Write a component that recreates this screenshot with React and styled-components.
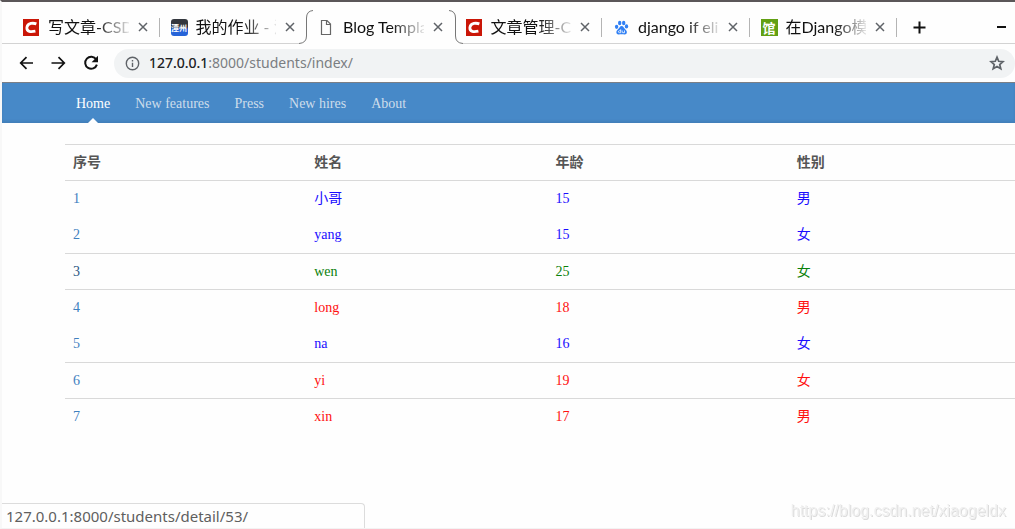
import React from 'react';
import styled, { createGlobalStyle, css } from 'styled-components';

const uiFont = '"Noto Sans", "Noto Sans CJK SC", sans-serif';
const tabFont = 'Lato, "Noto Sans CJK SC", sans-serif';
const pageFont = '"Liberation Serif", "Noto Sans CJK SC", serif';

const GlobalStyle = createGlobalStyle`
  *, *::before, *::after { box-sizing: border-box; }
  body { margin: 0; background: #fefefe; overflow: hidden; }
  button { padding: 0; border: 0; background: none; font: inherit; color: inherit; }
`;

const Window = styled.div`
  display: flex;
  flex-direction: column;
  min-height: 100vh;
  border-top: 2px solid #5b5759;
  border-left: 2px solid #f8f8f8;
  border-bottom: 1px solid #f3f3f3;
  background: #fefefe;
  font-family: ${uiFont};
`;

const TabStrip = styled.div`
  display: flex;
  height: 42px;
  padding-left: 10px;
  background: linear-gradient(#d3d3d3, #d3d3d3) bottom / 100% 1px no-repeat;
`;

const TabList = styled.div`
  display: grid;
  flex: 1;
  min-width: 0;
  grid-template-columns: repeat(6, minmax(0, 1fr));
`;

const Tab = styled.div`
  position: relative;
  display: flex;
  align-items: center;
  padding: 8px 12px 0 11px;
  ${(p) => p.$active && css`background: #fefefe;`}
`;

const TabDivider = styled.span`
  position: absolute;
  right: 0;
  top: 16px;
  width: 1px;
  height: 19px;
  background: #b4b4b4;
`;

const TabEdge = styled.svg`
  position: absolute;
  bottom: 0;
  z-index: 1;
  ${(p) => (p.$side === 'left' ? 'left: -8px;' : 'right: -8px; transform: scaleX(-1);')}
`;

const TabButton = styled.button`
  display: flex;
  flex: 1;
  min-width: 0;
  align-items: center;
  gap: 8px;
  font-family: ${tabFont};
  font-size: 16px;
  line-height: 24px;
  text-align: left;
  color: #111;
`;

const TabTitle = styled.span`
  flex: 1;
  min-width: 0;
  white-space: nowrap;
  mask-image: linear-gradient(to right, #000 60%, transparent 105%);
`;

const CloseButton = styled.button`
  display: grid;
  flex: none;
  width: 10px;
  height: 10px;
  margin-left: 9px;
`;

const StripActions = styled.div`
  display: flex;
  flex: none;
  width: 118px;
  align-items: center;
  justify-content: space-between;
  padding: 8px 9px 0 16px;
`;

const IconButton = styled.button`
  display: grid;
  flex: none;
  place-items: center;
`;

const Toolbar = styled.div`
  display: flex;
  align-items: center;
  height: 38px;
  padding-left: 15px;
`;

const NavButtons = styled.div`
  display: flex;
  gap: 17px;
  margin-right: 15px;
`;

const AddressBar = styled.label`
  display: flex;
  flex: 1;
  align-items: center;
  height: 29px;
  padding: 0 10px 0 11px;
  border-radius: 15px;
  background: #f1f3f4;
`;

const AddressField = styled.div`
  display: grid;
  flex: 1;
  margin-left: 9px;
  font-size: 14px;
  line-height: 24px;
  > * { grid-area: 1 / 1; }
`;

const AddressInput = styled.input`
  width: 100%;
  padding: 0;
  border: 0;
  outline: 0;
  background: none;
  font: inherit;
  color: #7b7e82;
`;

const AddressHost = styled.span`
  pointer-events: none;
  color: #202124;
`;

const Masthead = styled.nav`
  display: flex;
  gap: 25px;
  height: 41px;
  padding-left: 74px;
  border-top: 1px solid #7b7f86;
  background: #4789c8;
  box-shadow: inset 0 -2px 3px rgba(0, 0, 0, 0.08);
`;

const MastheadLink = styled.a`
  position: relative;
  height: 40px;
  font: 14px/42px ${pageFont};
  color: ${(p) => (p.$active ? '#fff' : '#cdddeb')};
  text-decoration: none;
  ${(p) => p.$active && css`
    &::after {
      content: '';
      position: absolute;
      bottom: 0;
      left: 50%;
      margin-left: -5px;
      border: 5px solid transparent;
      border-top: 0;
      border-bottom-color: #fff;
    }
  `}
`;

const Content = styled.main`
  flex: 1;
  margin: 21px -15px 0 63px;
`;

const Table = styled.table`
  width: 100%;
  table-layout: fixed;
  border-spacing: 0;
  font: 14px/20px ${pageFont};
`;

const Row = styled.tr`
  height: ${(p) => (p.$ruled ? 36 : 37)}px;
  color: ${(p) => p.$color};
  th, td {
    padding: 0 8px;
    text-align: left;
    border-top: ${(p) => (p.$ruled ? '1px solid #d9d9d9' : '0')};
  }
`;

const RowLink = styled.a`
  color: ${(p) => (p.$hover ? '#2a5584' : '#3f80be')};
  text-decoration: none;
`;

const StatusBubble = styled.div`
  position: fixed;
  left: 2px;
  bottom: 1px;
  width: 363px;
  height: 25px;
  padding-left: 4px;
  border: 1px solid #dcdcdc;
  border-width: 1px 1px 0 0;
  border-top-right-radius: 4px;
  background: #fefefe;
  font-size: 15px;
  line-height: 24px;
  color: #5f5f5f;
`;

const Watermark = styled.div`
  position: fixed;
  right: 9px;
  bottom: 8px;
  font: 16px/20px "Liberation Sans", sans-serif;
  color: #f0f0f0;
  text-shadow: 1px 1px 0 #dcdcdc;
`;

const CsdnIcon = () => (
  <svg width="17" height="17" viewBox="0 0 17 17">
    <rect width="16" height="17" fill="#ca1607" />
    <path d="M13.4 4.9C10.6 3.9 4.6 3.6 3.9 8.4C3.4 13 8 13 12.4 12.1" fill="none" stroke="#fff" strokeWidth="2.8" />
  </svg>
);

const GlyphTile = styled.span`
  flex: none;
  width: 17px;
  height: 17px;
  border-radius: ${(p) => p.$radius}px;
  background: ${(p) => p.$fill};
  font: bold ${(p) => p.$size}px/17px "Noto Sans CJK SC", sans-serif;
  text-align: center;
  white-space: nowrap;
  color: #fff;
`;

const PageIcon = () => (
  <svg width="17" height="17" viewBox="0 0 17 17">
    <path d="M3.5 1.5H9L12.5 5V15.5H3.5ZM8.5 1.5V5.5H12.5" fill="none" stroke="#666" strokeWidth="1.2" />
  </svg>
);

const BaiduIcon = () => (
  <svg width="17" height="17" viewBox="0 0 17 17" fill="#3180f4">
    <ellipse cx="3.6" cy="7.8" rx="1.7" ry="2.1" />
    <ellipse cx="6.7" cy="4" rx="1.7" ry="2.3" />
    <ellipse cx="10.7" cy="4" rx="1.7" ry="2.3" />
    <ellipse cx="13.5" cy="7.4" rx="1.7" ry="2.1" />
    <path d="M8.6 7C6.8 7 6.6 9 4.8 10.4C2.6 12 3 15.6 5.8 15.4C7.5 15.2 9.8 15.2 11.4 15.4C14.4 15.6 14.6 12 12.4 10.4C10.8 9 10.4 7 8.6 7Z" />
    <path d="M7.7 10.3V13.7H6.6Q5.4 13.6 5.4 12.7T6.6 11.7H7.7M9.2 11.5V13.1Q9.2 13.7 9.8 13.7H11.5V11.5" fill="none" stroke="#fff" strokeWidth=".8" />
  </svg>
);

const CloseIcon = () => (
  <svg width="10" height="10" viewBox="0 0 10 10">
    <path d="M1 1L9 9M9 1L1 9" stroke="#5f6368" strokeWidth="1.5" />
  </svg>
);

const ArrowIcon = ({ flip }) => (
  <svg width="16" height="16" viewBox="0 0 16 16">
    <path d={flip ? 'M1.5 8H14M8.5 2.2L14.3 8L8.5 13.8' : 'M16 8H3M9.5 2.2L3.7 8L9.5 13.8'} fill="none" stroke="#111" strokeWidth="1.7" />
  </svg>
);

const ReloadIcon = () => (
  <svg width="16" height="16" viewBox="0 0 16 16">
    <path d="M13.2 4.4A6 6 0 1 0 13.9 9.6" fill="none" stroke="#111" strokeWidth="2" />
    <path d="M15 .8V7.2H8.6Z" fill="#111" />
  </svg>
);

const InfoIcon = () => (
  <svg width="15" height="15" viewBox="0 0 15 15">
    <circle cx="7.5" cy="7.5" r="6.2" fill="none" stroke="#5f6368" strokeWidth="1.4" />
    <path d="M7.5 6.7V11M7.5 4V5.4" stroke="#5f6368" strokeWidth="1.4" />
  </svg>
);

const StarIcon = () => (
  <svg width="16" height="16" viewBox="0 0 16 16">
    <path d="M8 2.2L9.7 6.3L14 6.7L10.7 9.5L11.8 13.8L8 11.5L4.2 13.8L5.3 9.5L2 6.7L6.3 6.3Z" fill="none" stroke="#5f6368" strokeWidth="1.7" />
  </svg>
);

const PlusIcon = () => (
  <svg width="13" height="13" viewBox="0 0 13 13">
    <path d="M6.5 .5V12.5M.5 6.5H12.5" stroke="#111" strokeWidth="2" />
  </svg>
);

const MinimizeIcon = () => (
  <svg width="9" height="13" viewBox="0 0 9 13">
    <path d="M0 6H9" stroke="#111" strokeWidth="2" />
  </svg>
);

const Edge = ({ side }) => (
  <TabEdge $side={side} width="15" height="34" viewBox="0 0 15 34">
    <path d="M0 33.5Q7.5 33 7.5 26V8Q7.5 1 14 .5H15V34H0Z" fill="#fefefe" />
    <path d="M0 33.5Q7.5 33 7.5 26V8Q7.5 1 14 .5" fill="none" stroke="#777" />
  </TabEdge>
);

const tabs = [
  { title: '写文章-CSD', icon: <CsdnIcon />, divider: true },
  { title: '我的作业 - 潭', icon: <GlyphTile $fill="linear-gradient(#33373e 45%, #2563d8 60%)" $radius={3} $size={8}>潭州</GlyphTile> },
  { title: 'Blog Templa', icon: <PageIcon />, active: true },
  { title: '文章管理-CS', icon: <CsdnIcon />, divider: true },
  { title: 'django if eli', icon: <BaiduIcon />, divider: true },
  { title: '在Django模', icon: <GlyphTile $fill="#62a013" $radius={0} $size={13}>馆</GlyphTile>, divider: true },
];

const links = ['Home', 'New features', 'Press', 'New hires', 'About'];

const students = [
  { name: '小哥', age: 15, sex: '男', color: '#1a0dff', ruled: true },
  { name: 'yang', age: 15, sex: '女', color: '#1a0dff' },
  { name: 'wen', age: 25, sex: '女', color: '#0a800a', ruled: true, hover: true },
  { name: 'long', age: 18, sex: '男', color: '#ff1010', ruled: true },
  { name: 'na', age: 16, sex: '女', color: '#1a0dff' },
  { name: 'yi', age: 19, sex: '女', color: '#ff1010', ruled: true },
  { name: 'xin', age: 17, sex: '男', color: '#ff1010', ruled: true },
];

export default function App() {
  return (
    <Window>
      <GlobalStyle />
      <TabStrip>
        <TabList>
          {tabs.map((tab) => (
            <Tab key={tab.title} $active={tab.active}>
              {tab.active && <Edge side="left" />}
              <TabButton>
                {tab.icon}
                <TabTitle>{tab.title}</TabTitle>
              </TabButton>
              <CloseButton aria-label="Close tab"><CloseIcon /></CloseButton>
              {tab.divider && <TabDivider />}
              {tab.active && <Edge side="right" />}
            </Tab>
          ))}
        </TabList>
        <StripActions>
          <IconButton aria-label="New tab"><PlusIcon /></IconButton>
          <IconButton aria-label="Minimize"><MinimizeIcon /></IconButton>
        </StripActions>
      </TabStrip>
      <Toolbar>
        <NavButtons>
          <IconButton aria-label="Back"><ArrowIcon /></IconButton>
          <IconButton aria-label="Forward"><ArrowIcon flip /></IconButton>
          <IconButton aria-label="Reload"><ReloadIcon /></IconButton>
        </NavButtons>
        <AddressBar>
          <InfoIcon />
          <AddressField>
            <AddressInput aria-label="Address" defaultValue="127.0.0.1:8000/students/index/" />
            <AddressHost aria-hidden="true">127.0.0.1</AddressHost>
          </AddressField>
          <IconButton aria-label="Bookmark"><StarIcon /></IconButton>
        </AddressBar>
      </Toolbar>
      <Masthead>
        {links.map((label, i) => (
          <MastheadLink key={label} href="#" $active={i === 0}>{label}</MastheadLink>
        ))}
      </Masthead>
      <Content>
        <Table>
          <thead>
            <Row $ruled $color="#555">
              <th>序号</th>
              <th>姓名</th>
              <th>年龄</th>
              <th>性别</th>
            </Row>
          </thead>
          <tbody>
            {students.map((s, i) => (
              <Row key={s.name} $ruled={s.ruled} $color={s.color}>
                <td><RowLink href="#" $hover={s.hover}>{i + 1}</RowLink></td>
                <td>{s.name}</td>
                <td>{s.age}</td>
                <td>{s.sex}</td>
              </Row>
            ))}
          </tbody>
        </Table>
      </Content>
      <StatusBubble>127.0.0.1:8000/students/detail/53/</StatusBubble>
      <Watermark>https://blog.csdn.net/xiaogeldx</Watermark>
    </Window>
  );
}
